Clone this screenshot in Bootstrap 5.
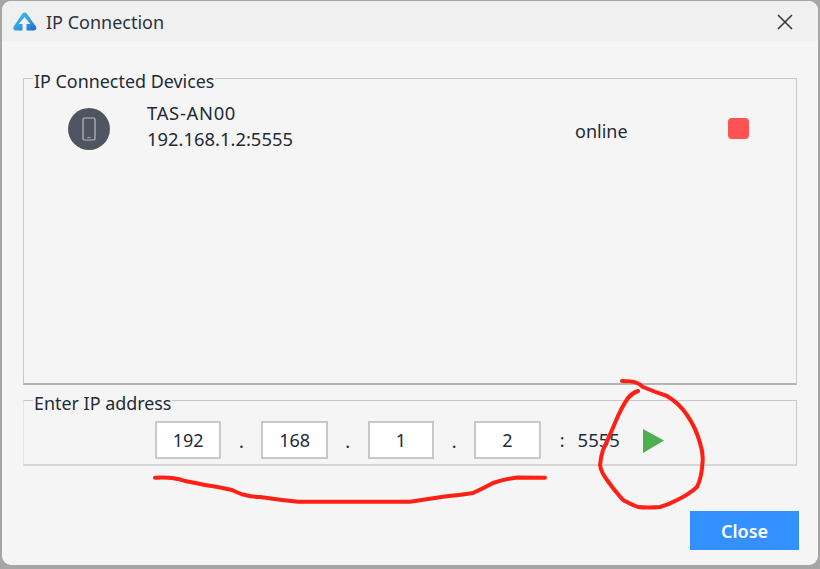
<!DOCTYPE html>
<html lang="en">
<head>
<meta charset="utf-8">
<title>IP Connection</title>
<link rel="stylesheet" href="https://cdn.jsdelivr.net/npm/bootstrap@5.3.0/dist/css/bootstrap.min.css">
<style>
html,body{height:100%;}
body{background:#a6a6a6;font-family:"Noto Sans","Open Sans","Liberation Sans",sans-serif;font-size:18px;color:#222b36;overflow:hidden;}
.shell{position:relative;width:820px;height:569px;padding:1px 2px 4px 2px;}
.win{height:564px;background:#f5f5f5;border-radius:9px;overflow:hidden;}
.titlebar{height:40px;background:#f0f0f0;padding:2px 0 0 11px;}
.titlebar .ttl{font-size:18px;margin-left:9px;line-height:1;color:#2b3340;}
.x-btn{margin-right:25px;}
.pane{margin:0 21px;padding:0;border:1px solid #c9c9c9;background:#f5f5f5;min-width:0;}
.pane legend{float:none;width:auto;font-size:17.9px;line-height:20px;margin:0 0 0 9px;padding:0 1px;color:#222b36;position:relative;top:3px;}
.pane-a{margin-top:27px;height:317px;border-bottom:2px solid #b4b4b4;}
.pane-b{margin-top:5px;height:76px;border-left-color:#e6e6e6;border-bottom:2px solid #d6d6d6;}
.dev-row{padding:14px 46px 0 44px;}
.avatar{width:42px;height:42px;border-radius:50%;background:#4f5560;margin-top:4px;}
.dev-txt{margin-left:37px;width:428px;line-height:26px;font-size:18.4px;margin-top:-2px;}
.dev-name{letter-spacing:.7px;}
.dev-state{width:153.5px;font-size:18px;margin-top:8px;}
.stop{width:21px;height:21px;border-radius:4px;background:#ff5252;margin-top:3px;margin-left:-.5px;}
.ip-row{padding:11px 0 0 131px;}
.octet.form-control{width:66.4px;height:38px;padding:0;border:2px solid #c8c8c8;border-radius:0;background:#fff;font-size:18px;text-align:center;color:#222b36;box-shadow:none;flex:none;}
.sep{width:40px;text-align:center;font-size:18px;margin-top:3px;}
.sep-c{width:37px;padding-left:6px;text-align:center;font-size:18px;}
.port{font-size:18.5px;width:65px;}
.play-mark{margin-top:1px;}
.foot{padding:45px 19px 0 0;}
.btn.close-btn{width:109px;height:39px;padding:2px 0 0;border:0;border-radius:0;background:#3391ff;color:#fff;font-size:18px;font-weight:600;}
.ink{position:absolute;left:0;top:0;pointer-events:none;}
</style>
</head>
<body>
<div class="shell">
  <div class="win">
    <div class="titlebar d-flex align-items-center">
      <svg width="24" height="20" viewBox="0 0 24 20" aria-hidden="true">
        <defs>
          <linearGradient id="lg" x1="0" y1="0" x2="1" y2="1">
            <stop offset="0" stop-color="#3fc4e8"/><stop offset=".55" stop-color="#2f9ee0"/><stop offset="1" stop-color="#2a5fd0"/>
          </linearGradient>
        </defs>
        <path fill="url(#lg)" d="M9.6 1.3q2-1.8 3.9 0l9.4 13.2q1.500 3-1.400 4H13.500V12h3.900L11.600 5 5.700 12H9.500v6.600H2.200Q-.8 17.500.7 14.500Z"/>
      </svg>
      <span class="ttl">IP Connection</span>
      <svg class="ms-auto x-btn" width="16" height="16" viewBox="0 0 16 16" aria-hidden="true"><path d="M1 1l14 14M15 1L1 15" stroke="#333" stroke-width="1.500" fill="none"/></svg>
    </div>
    <fieldset class="pane pane-a">
      <legend>IP Connected Devices</legend>
      <div class="dev-row d-flex align-items-center">
        <div class="avatar d-flex align-items-center justify-content-center flex-shrink-0">
          <svg width="14" height="24" viewBox="0 0 14 24" aria-hidden="true"><rect x="1" y="1" width="12" height="22" rx="1.500" fill="none" stroke="#b9bcc1" stroke-width="1.200"/><path d="M5.500 20.500h3" stroke="#b9bcc1" stroke-width=".8"/></svg>
        </div>
        <div class="dev-txt"><div class="dev-name">TAS-AN00</div><div>192.168.1.2:5555</div></div>
        <div class="dev-state">online</div>
        <div class="stop flex-shrink-0"></div>
      </div>
    </fieldset>
    <fieldset class="pane pane-b">
      <legend>Enter IP address</legend>
      <div class="ip-row d-flex align-items-center">
        <input class="form-control octet" value="192" aria-label="Octet 1">
        <span class="sep">.</span>
        <input class="form-control octet" value="168" aria-label="Octet 2">
        <span class="sep">.</span>
        <input class="form-control octet" value="1" aria-label="Octet 3">
        <span class="sep">.</span>
        <input class="form-control octet" value="2" aria-label="Octet 4">
        <span class="sep-c">:</span>
        <span class="port">5555</span>
        <svg class="play-mark" width="21" height="24" viewBox="0 0 21 24" aria-hidden="true"><path d="M0 0l21 11.500L0 24Z" fill="#4caf50"/></svg>
      </div>
    </fieldset>
    <div class="foot d-flex justify-content-end">
      <button type="button" class="btn close-btn">Close</button>
    </div>
  </div>
  <svg class="ink" width="820" height="569" viewBox="0 0 820 569" aria-hidden="true" fill="none" stroke="#ff2015" stroke-width="4" stroke-linecap="round" stroke-linejoin="round">
    <path d="M155 477.700Q165 477 172 478Q180 479 185 481Q196 483 205 485Q220 487 232 490Q240 494 245 495Q253 497 260 497Q280 500 298 501.700L410 501.700Q428 499 443 496.700Q460 495 473 493Q484 488 493 483Q505 479 517 477.500L545 477.700"/>
    <path d="M622 381Q632 381 636 382.500Q640 384 643 387Q655 392 667 396Q680 404 687 415Q696 428 700 443Q703 452 702.700 460Q702 477 697 487Q688 495 677 500Q668 505 660 507Q648 508 638 507Q630 504 623 500Q614 490 607 480Q601 472 600 465Q601 456 603 450Q610 435 615 423Q621 408 628 398Q632 393 638 391"/>
  </svg>
</div>
</body>
</html>
